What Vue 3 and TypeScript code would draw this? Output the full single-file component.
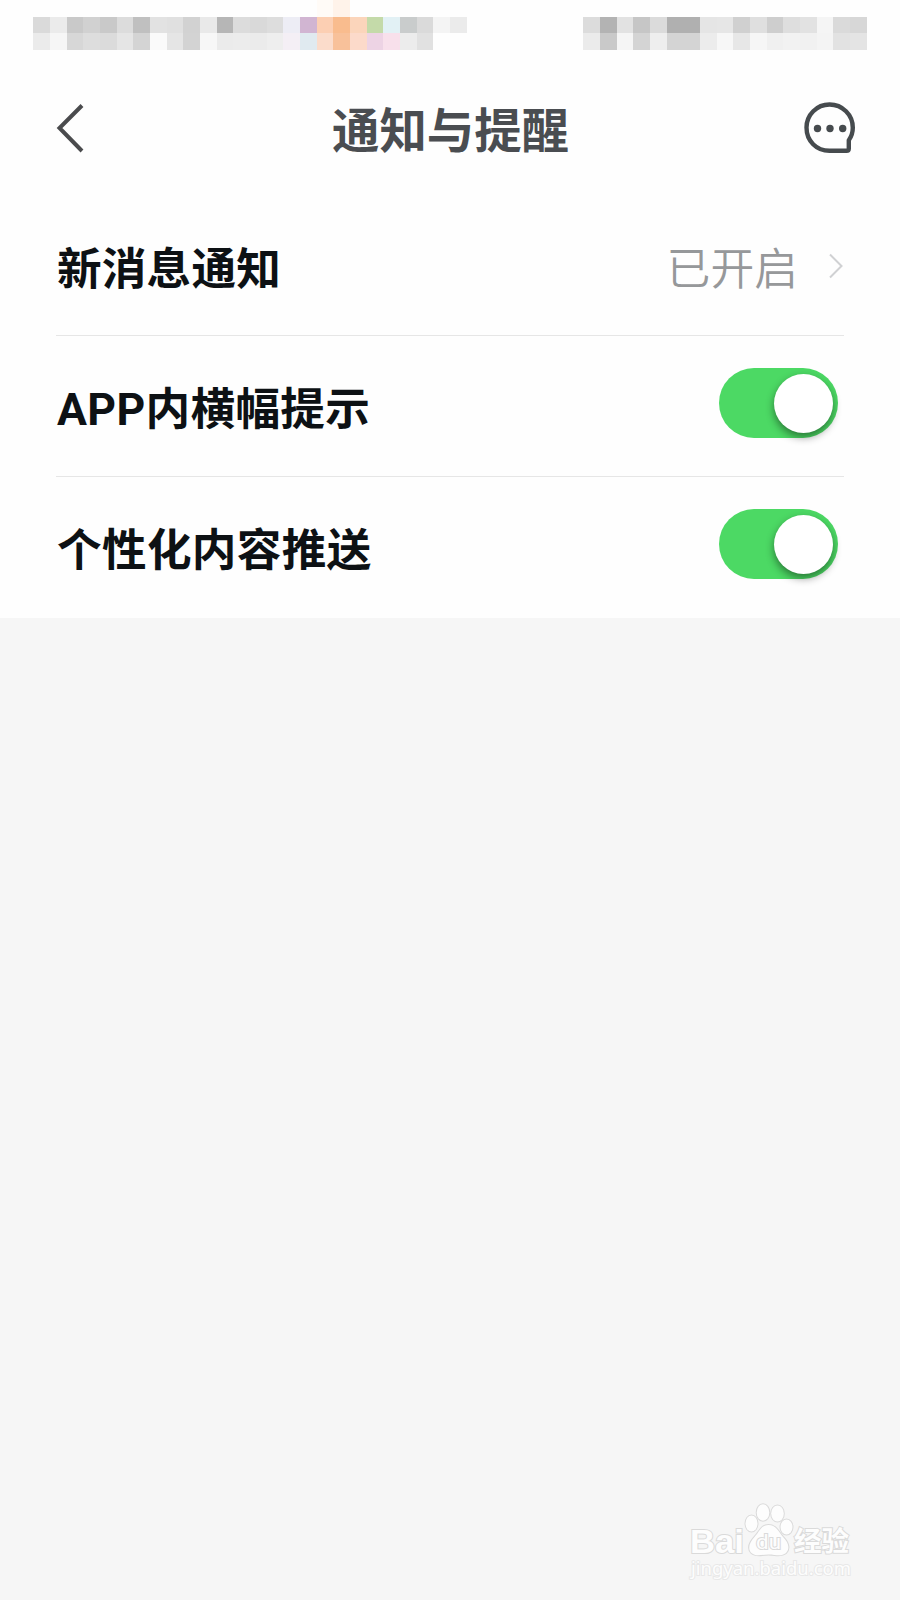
<script setup lang="ts">
import { ref } from 'vue'

interface Cell { key: string; column: number; row: number; color: string }
interface Toggle { id: string; label: string; on: boolean }

function strip(start: number, row: number, colors: string): Cell[] {
  return colors.split(' ').map((c, i) => ({
    key: `${row}-${start + i}`,
    column: start + i,
    row,
    color: '#' + c,
  }))
}

const cells: Cell[] = [
  ...strip(20, 1, 'fffbf7 fff3ea'),
  ...strip(3, 2, 'dadada ebebeb c9c9c9 d1d1d1 c9c9c9 dcdcdc c0c0c0 e2e2e2 e0e0e0 d2d2d2 e9e9e9 b6b6b6 dcdcdc d9d9d9 dddddd ededf5 d1b5d2 fccfb3 f9bc8e fbd5bb c4daa9 e2f1f5 c9cccc dadada f4f4f4 ebebeb'),
  ...strip(3, 3, 'ebebeb f6f6f6 d7d7d7 dddddd dbdbdb e5e5e5 d4d4d4 fafafa e5e5e5 d3d3d3 f7f7f7 ebebeb ececec ebebeb eeeeee f4eff5 e0eaf0 fbdccb f8c19a fcdaca edd3e4 f8e0eb ececec e1e1e1'),
  ...strip(36, 2, 'dcdcdc b3b3b3 e2e2e2 c6c6c6 dbdbdb b0b0b0 b0b0b0 e5e5e5 e6e6e6 d0d0d0 dfdfdf cecece dedede e2e2e2 f5f5f5 dadada d7d7d7'),
  ...strip(36, 3, 'ebebeb c9c9c9 f5f5f5 d4d4d4 eeeeee d4d4d4 d4d4d4 ececec f7f7f7 e7e7e7 f6f6f6 f0f0f0 f2f2f2 f1f1f1 f4f4f4 e2e2e2 e4e4e4'),
]

const toggles = ref<Toggle[]>([
  { id: 'banner', label: 'APP内横幅提示', on: true },
  { id: 'push', label: '个性化内容推送', on: true },
])
</script>

<template>
  <div class="screen">
    <div class="status">
      <i
        v-for="c in cells"
        :key="c.key"
        :style="{ gridColumn: c.column, gridRow: c.row, background: c.color }"
      ></i>
    </div>

    <header class="bar">
      <svg class="back" width="30" height="52" viewBox="0 0 30 52" fill="none">
        <path d="M26 3.500 3.500 26 26 49" stroke="#4a4b4d" stroke-width="4" />
      </svg>
      <h1>通知与提醒</h1>
      <svg class="chat" width="52" height="52" viewBox="0 0 52 52">
        <path
          d="M25.5 2.5A23 23 0 0 0 2.5 25.5C2.5 39 12.5 48.8 25.5 48.8H42.5Q44.8 48.8 44.8 46.5V38.2C47.3 34.8 48.8 30.5 48.8 25.8A23.2 23.2 0 0 0 25.5 2.5Z"
          fill="none" stroke="#464b4e" stroke-width="4.4" stroke-linejoin="round"
        />
        <g fill="#464b4e">
          <circle cx="13.5" cy="26.500" r="3.700" />
          <circle cx="26" cy="26.500" r="3.700" />
          <circle cx="38.700" cy="26.500" r="3.700" />
        </g>
      </svg>
    </header>

    <main class="list">
      <div class="row">
        <span class="label">新消息通知</span>
        <span class="value">已开启</span>
        <svg class="arrow" width="16" height="28" viewBox="0 0 16 28" fill="none">
          <path d="M2 2.5 13.5 14 2 25.5" stroke="#d0d1d3" stroke-width="2" />
        </svg>
      </div>
      <div v-for="t in toggles" :key="t.id" class="row">
        <span class="label">{{ t.label }}</span>
        <button
          class="switch" :class="{ on: t.on }" role="switch"
          :aria-checked="t.on" :aria-label="t.label" @click="t.on = !t.on"
        ><span class="knob"></span></button>
      </div>
    </main>

    <footer class="brand">
      <svg width="180" height="100" viewBox="0 0 180 100">
        <g fill="#fdfdfd" stroke="#dadada" stroke-width="2" paint-order="stroke">
          <text x="10" y="62.500" class="latin" font-size="34" textLength="54" lengthAdjust="spacingAndGlyphs">Bai</text>
          <ellipse cx="71.500" cy="33.500" rx="6" ry="8" />
          <ellipse cx="83" cy="22.500" rx="6.300" ry="8.300" />
          <ellipse cx="97.500" cy="23.500" rx="6.300" ry="8" />
          <ellipse cx="106.500" cy="37" rx="6" ry="7.600" />
          <path d="M88.500 35C96 35 98 41 103 47C109 53 110 59 106 63C101 67 96 64.500 88.500 64.500S76 67 71.500 63C67.500 59 69 53 74.500 47C80 41 81 35 88.500 35Z" />
          <text x="76" y="59" class="du" font-size="21" textLength="25" lengthAdjust="spacingAndGlyphs">du</text>
          <text x="114" y="61" class="cjk" font-size="27" textLength="55" lengthAdjust="spacingAndGlyphs">经验</text>
          <text x="11" y="85" class="url" font-size="18" textLength="160" lengthAdjust="spacingAndGlyphs">jingyan.baidu.com</text>
        </g>
      </svg>
    </footer>
  </div>
</template>

<style>
body {
  margin: 0;
}
</style>

<style scoped>
.screen {
  width: 900px;
  height: 1600px;
  display: flex;
  flex-direction: column;
  overflow: hidden;
  background: #f6f6f6;
  font-family: Roboto, "Noto Sans CJK SC", sans-serif;
}
.status {
  display: grid;
  grid-template-columns: repeat(54, 1fr);
  grid-template-rows: repeat(3, 16.667px);
  height: 70px;
  flex: none;
  background: #fefefe;
}
.bar {
  height: 124px;
  flex: none;
  box-sizing: border-box;
  padding: 0 44px 8px 56px;
  display: grid;
  grid-template-columns: 52px 1fr 52px;
  align-items: center;
  background: #fefefe;
}
h1 {
  margin: 8px 0 0;
  padding-right: 11px;
  text-align: center;
  font-size: 47.4px;
  line-height: 70px;
  font-weight: 700;
  color: #4a4d51;
}
.list {
  flex: none;
  padding: 0 56px;
  background: #fefefe;
}
.row {
  height: 141px;
  box-sizing: border-box;
  display: flex;
  align-items: center;
  border-bottom: 1px solid #e6e6e6;
}
.row:first-child {
  height: 142px;
}
.row:last-child {
  height: 141px;
  border-bottom-color: transparent;
}
.label {
  flex: 1;
  padding: 8px 0 0 1px;
  font-size: 44.6px;
  letter-spacing: 0.35px;
  line-height: 66px;
  font-weight: 700;
  color: #0d1114;
}
.row:first-child .label {
  padding-top: 10px;
  letter-spacing: 0.2px;
}
.value {
  padding-top: 11px;
  margin-right: 30px;
  font-size: 43.8px;
  line-height: 64px;
  font-weight: 350;
  color: #96989a;
}
.arrow {
  margin-top: 2px;
}
.switch {
  width: 119px;
  height: 70px;
  margin: 0 6px 6px 0;
  padding: 6px 5px;
  box-sizing: border-box;
  display: flex;
  border: 0;
  border-radius: 35px;
  background: #d8d8d8;
}
.switch.on {
  justify-content: flex-end;
  background: #4cd964;
}
.knob {
  width: 59px;
  height: 59px;
  border-radius: 50%;
  background: #fff;
  box-shadow: 0 4px 9px rgba(0, 0, 0, 0.45);
}
.brand {
  margin-top: auto;
  display: flex;
  justify-content: flex-end;
  padding: 0 40px 10px 0;
}
.latin {
  font-family: "Liberation Sans", sans-serif;
  font-weight: 700;
}
.du {
  font-family: Roboto, sans-serif;
}
.cjk {
  font-family: "Noto Sans CJK SC", sans-serif;
  font-weight: 700;
}
.url {
  font-family: "Noto Sans", sans-serif;
  stroke: #e8e8e8;
}
</style>
